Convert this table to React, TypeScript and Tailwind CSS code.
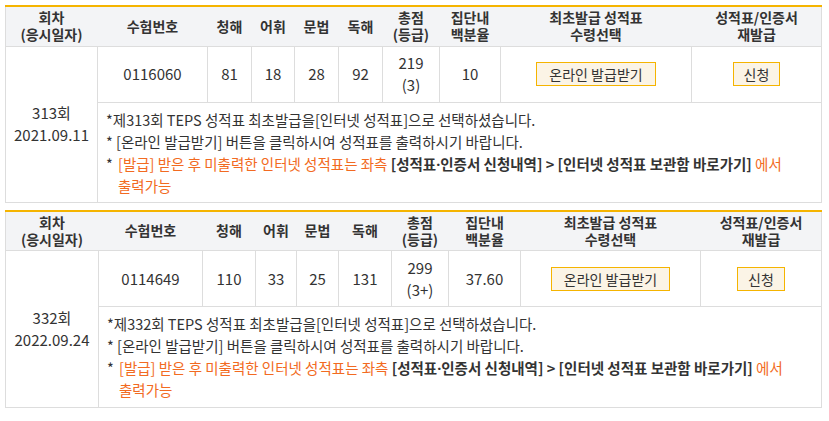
import React from "react";

type Row = {
  round: string;
  date: string;
  id: string;
  l: string;
  v: string;
  g: string;
  r: string;
  total: string;
  grade: string;
  pct: string;
  cols: number[];
};

const rows: Row[] = [
  {
    round: "313",
    date: "2021.09.11",
    id: "0116060",
    l: "81",
    v: "18",
    g: "28",
    r: "92",
    total: "219",
    grade: "(3)",
    pct: "10",
    cols: [92, 110, 44, 43, 44, 44, 57, 61, 191, 130],
  },
  {
    round: "332",
    date: "2022.09.24",
    id: "0114649",
    l: "110",
    v: "33",
    g: "25",
    r: "131",
    total: "299",
    grade: "(3+)",
    pct: "37.60",
    cols: [93, 104, 53, 41, 42, 53, 57, 72, 180, 121],
  },
];

const th =
  "border-x border-t-2 border-t-[#f5b400] border-b border-b-[#dddddd] font-bold text-[14px] leading-[17px] text-[#333333] text-center align-middle p-0";
const td =
  "border border-[#dddddd] text-[15px] leading-[22px] text-[#333333] text-center align-middle p-0";

function ScoreTable({ row, last }: { row: Row; last: boolean }) {
  return (
    <table className="w-[816px] table-fixed border-collapse border border-[#dddddd] bg-white">
      <colgroup>
        {row.cols.map((w, i) => (
          <col key={i} style={{ width: w }} />
        ))}
      </colgroup>
      <thead>
        <tr className="h-[40px] bg-[#f3f4f6]">
          <th className={th + " border-l-[#dddddd] border-r-transparent"}>
            회차
            <br />
            (응시일자)
          </th>
          <th className={th + " border-x-transparent"}>수험번호</th>
          <th className={th + " border-x-transparent"}>청해</th>
          <th className={th + " border-x-transparent"}>어휘</th>
          <th className={th + " border-x-transparent"}>문법</th>
          <th className={th + " border-x-transparent"}>독해</th>
          <th className={th + " border-x-transparent"}>
            총점
            <br />
            (등급)
          </th>
          <th className={th + " border-x-transparent"}>
            집단내
            <br />
            백분율
          </th>
          <th className={th + " border-x-transparent"}>
            최초발급 성적표
            <br />
            수령선택
          </th>
          <th className={th + " border-l-transparent border-r-[#dddddd]"}>
            성적표/인증서
            <br />
            재발급
          </th>
        </tr>
      </thead>
      <tbody>
        <tr className="h-[56px]">
          <td rowSpan={2} className={td}>
            {row.round}회
            <br />
            {row.date}
          </td>
          <td className={td}>{row.id}</td>
          <td className={td}>{row.l}</td>
          <td className={td}>{row.v}</td>
          <td className={td}>{row.g}</td>
          <td className={td}>{row.r}</td>
          <td className={td}>
            {row.total}
            <br />
            {row.grade}
          </td>
          <td className={td}>{row.pct}</td>
          <td className={td}>
            <button className="h-[24px] px-[12px] border border-[#f5b400] bg-[#fbf4e6] text-[14px] leading-[22px] text-[#333333]">
              온라인 발급받기
            </button>
          </td>
          <td className={td}>
            <button className="h-[24px] px-[10px] border border-[#f5b400] bg-[#fbf4e6] text-[14px] leading-[22px] text-[#333333]">
              신청
            </button>
          </td>
        </tr>
        <tr>
          <td
            colSpan={9}
            className={
              "border border-[#dddddd] text-left align-top pl-[8px] pr-[6px] pt-[6px] text-[14.5px] leading-[22px] text-[#333333] " +
              (last ? "pb-[6px]" : "pb-[5px]")
            }
          >
            <div>*제{row.round}회 TEPS 성적표 최초발급을[인터넷 성적표]으로 선택하셨습니다.</div>
            <div>* [온라인 발급받기] 버튼을 클릭하시여 성적표를 출력하시기 바랍니다.</div>
            <div className="flex">
              <span className="w-[12px] shrink-0">*</span>
              <span className="text-[#f26a21]">
                [발급] 받은 후 미출력한 인터넷 성적표는 좌측{" "}
                <b className="font-bold text-[#333333]">
                  [성적표
                  <span style={{ fontFamily: '"Noto Sans", sans-serif' }}>·</span>
                  인증서 신청내역] &gt; [인터넷 성적표 보관함 바로가기]
                </b>{" "}
                에서
                <br />
                출력가능
              </span>
            </div>
          </td>
        </tr>
      </tbody>
    </table>
  );
}

export default function App() {
  return (
    <div
      className="bg-white w-[829px] min-h-[421px] pt-[5px] pl-[5px] flex flex-col gap-[7px]"
      style={{ fontFamily: '"Noto Sans CJK KR", "Noto Sans", sans-serif' }}
    >
      {rows.map((r, i) => (
        <ScoreTable key={r.round} row={r} last={i === rows.length - 1} />
      ))}
    </div>
  );
}
